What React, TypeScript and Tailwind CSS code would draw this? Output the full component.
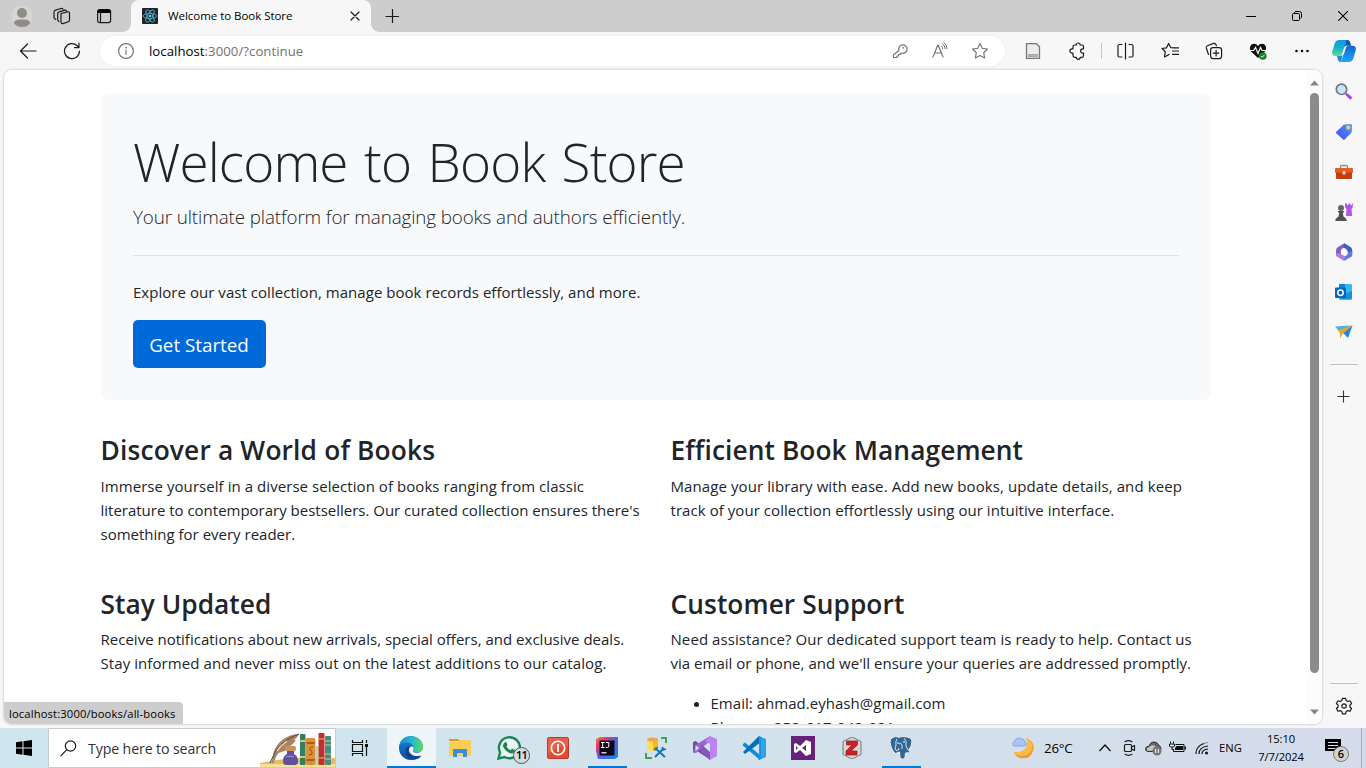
import React from "react";

type SvgProps = { w: number; h?: number; children: React.ReactNode; className?: string };

function Svg({ w, h = w, children, className = "" }: SvgProps) {
  return (
    <svg width={w} height={h} viewBox={`0 0 ${w} ${h}`} fill="none" className={`shrink-0 ${className}`}>
      {children}
    </svg>
  );
}

const line = { stroke: "#1b1b1b", strokeWidth: 1.2, strokeLinecap: "round" as const, strokeLinejoin: "round" as const };
const grey = { ...line, stroke: "#767676" };

function Cell({ className, children }: { className: string; children: React.ReactNode }) {
  return <div className={`flex shrink-0 items-center justify-center ${className}`}>{children}</div>;
}

/* ---------- Title bar ---------- */

function TitleBar() {
  return (
    <div className="flex h-8 shrink-0 bg-[#cdcdcd]">
      <Cell className="w-11">
        <Svg w={22}>
          <circle cx="11" cy="11" r="10.5" fill="#d8d6d3" />
          <circle cx="11" cy="8" r="5" fill="#8f8c88" />
          <path d="M3 18.5C3 15 6 14.500 11 14.500s8 .5 8 4C17 21 14 22 11 22s-6-1-8-3.500Z" fill="#8f8c88" />
        </Svg>
      </Cell>
      <Cell className="w-9">
        <Svg w={18}>
          <path d="M8 6.500 14.500 4.800q2-.4 2 1.400v7q0 1.200-1.200 1.500L10 16.600q-2 .4-2-1.600V8.200q0-1.300 0-1.700Z" {...line} />
          <path d="M6 14.600q-1.300-.5-1.300-2V6.700q0-1.500 1.500-1.900l5.500-1.600q1.200-.3 1.800.6" {...line} />
          <path d="M2.800 12.400Q1 12 1 10.200V5q0-1.500 1.500-1.900L8 1.500q1.200-.3 1.900.5" {...line} />
        </Svg>
      </Cell>
      <Cell className="w-12">
        <Svg w={16}>
          <rect x="1.600" y="1.600" width="13" height="13" rx="2" {...line} />
          <path d="M1.500 5V3.500q0-2 2-2h9q2 0 2 2V5Z" fill="#000" />
          <path d="M4.500 5v9" {...line} />
        </Svg>
      </Cell>
      <div className="relative ml-[3px] flex w-60 items-center rounded-t-lg bg-[#f7f7f7] pl-[11px]">
        <div className="absolute bottom-0 -left-2 h-2 w-2 bg-[radial-gradient(circle_at_0_0,#cdcdcd_7.500px,#f7f7f7_8px)]" />
        <div className="absolute -right-2 bottom-0 h-2 w-2 bg-[radial-gradient(circle_at_100%_0,#cdcdcd_7.500px,#f7f7f7_8px)]" />
        <Svg w={16}>
          <rect width="16" height="16" rx="1" fill="#20232a" />
          <g stroke="#4fa8c4" strokeWidth=".9">
            <ellipse cx="8" cy="8" rx="6.800" ry="2.600" />
            <ellipse cx="8" cy="8" rx="6.800" ry="2.600" transform="rotate(60 8 8)" />
            <ellipse cx="8" cy="8" rx="6.800" ry="2.600" transform="rotate(120 8 8)" />
          </g>
          <circle cx="8" cy="8" r="1.300" fill="#61dafb" />
        </Svg>
        <span className="ml-[10px] text-[11.500px] tracking-[-0.04px] whitespace-nowrap text-black">Welcome to Book Store</span>
        <Svg w={10} className="absolute left-[219px] top-[11px]">
          <path d="m1 1 8 8M9 1 1 9" {...line} />
        </Svg>
      </div>
      <Cell className="w-[42px]">
        <Svg w={14}>
          <path d="M7.500.5v13M1 7.500h13" {...line} />
        </Svg>
      </Cell>
      <div className="ml-auto flex">
        <Cell className="w-[46px]">
          <Svg w={10}><path d="M0 5.500h10" stroke="#000" /></Svg>
        </Cell>
        <Cell className="w-[46px]">
          <Svg w={10}>
            <rect x=".5" y="2.500" width="7" height="7" rx="1" stroke="#000" />
            <path d="M2.500 2V1.500q.3-1 1.300-1h3.700q2 0 2 2v3.700q0 1-1 1.300" stroke="#000" />
          </Svg>
        </Cell>
        <Cell className="w-[46px]">
          <Svg w={10}><path d="m0 0 10 10M10 0 0 10" stroke="#000" strokeWidth="1.100" /></Svg>
        </Cell>
      </div>
    </div>
  );
}

/* ---------- Toolbar ---------- */

function Toolbar() {
  return (
    <div className="flex h-[38px] shrink-0 bg-[#f7f7f7]">
      <Cell className="w-14">
        <Svg w={18}><path d="M17 9H1.500M8.500 2l-7 7 7 7" {...line} /></Svg>
      </Cell>
      <Cell className="w-8">
        <Svg w={18}>
          <path d="M16.500 9A7.500 7.500 0 1 1 14 3.500L16 5.500M16 1.200v4.400h-4.500" {...line} />
        </Svg>
      </Cell>
      <div className="mt-1 ml-3 flex h-[30px] w-[905px] items-center rounded-full bg-white shadow-[0_0_3px_rgba(0,0,0,0.06)]">
        <Cell className="ml-[17px] w-[18px]">
          <Svg w={18}>
            <circle cx="9" cy="9" r="7.400" {...grey} />
            <path d="M9 8v4.500" {...grey} />
            <circle cx="9" cy="5.600" r=".9" fill="#767676" />
          </Svg>
        </Cell>
        <span className="ml-[14px] pt-[2px] text-[13.200px] tracking-[0.04px] text-[#727272]">
          <span className="text-black">localhost</span>:3000/?continue
        </span>
        <div className="ml-auto mr-[5px] flex">
          <Cell className="w-10">
            <Svg w={16}>
              <path d="M7 7.500a4.200 4.200 0 1 1 2.500 2.500L8 11.500H6.500V13H5v1.500H1.500v-2.800Z" {...grey} />
              <circle cx="11.200" cy="4.800" r=".9" fill="#767676" />
            </Svg>
          </Cell>
          <Cell className="w-10">
            <Svg w={18}>
              <path d="m2 15 4.800-12h.4L12 15M3.700 11h6.600" {...grey} />
              <path d="M10.500 4q1.300 1 1.300 3M11.500 1.700q2.500 1.800 2.600 5M13 .7q3 2.300 3.200 6" {...grey} strokeWidth={1} />
            </Svg>
          </Cell>
          <Cell className="w-10">
            <Svg w={18}>
              <path d="m9 1.500 2.300 4.800 5.200.7-3.800 3.700.9 5.300L9 13.500 4.400 16l.9-5.300L1.500 7l5.200-.7Z" {...grey} />
            </Svg>
          </Cell>
        </div>
      </div>
      <div className="ml-[6px] flex">
        <Cell className="w-11">
          <Svg w={16}>
            <path d="M1.500.7h10l3 3v11.600h-13Z" fill="#ececec" stroke="#777" strokeWidth="1.300" />
            <path d="M3.500 11.500h9v2h-9Z" fill="#b5b5b5" stroke="#888" strokeWidth=".6" />
          </Svg>
        </Cell>
        <Cell className="w-11">
          <Svg w={18}>
            <path d="M5 4.500Q5 3 6.500 3h1.700a2 2 0 0 1 4 0H14q1.500 0 1.500 1.500v2.300h-.7a2 2 0 0 0 0 4.400h.7v2.600q0 1.500-1.500 1.500h-1.800a2 2 0 0 1-4 0H6.500Q5 15.300 5 13.800v-2.600h-.9a2.200 2.200 0 0 1 0-4.400H5Z" {...line} />
          </Svg>
        </Cell>
        <Cell className="w-1"><div className="h-4 w-px bg-[#c6c6c6]" /></Cell>
        <Cell className="w-11">
          <Svg w={18}>
            <path d="M6 2.500H3.500q-1.500 0-1.500 1.500v9.500Q2 15 3.500 15H6M9.500 1v16M13 2.500h2.500Q17 2.500 17 4v9.500q0 1.500-1.500 1.500H13" {...line} />
          </Svg>
        </Cell>
        <Cell className="w-[45px]">
          <Svg w={18}>
            <path d="m13.500 6-3.800-.4L7.600 1.500 5.500 5.800 1 6.500l3.300 3.200-.8 5.300 4.600-2.600M11.500 9h6M12.500 5.800h5M11.500 12.300h6" {...line} />
          </Svg>
        </Cell>
        <Cell className="w-11">
          <Svg w={18}>
            <rect x="5.600" y="5.600" width="11" height="11" rx="2.500" {...line} />
            <path d="M11.100 8.300v5.600M8.300 11.100h5.600M3.500 12.500 1.300 6Q.8 4.300 2.300 3.700L8.700 1.400q1.600-.5 2.200 1.100l.5 1.300" {...line} />
          </Svg>
        </Cell>
        <Cell className="w-11">
          <Svg w={18}>
            <path d="M9 16 2 9.500C-.5 6 1.500 1.800 5 1.800Q7.700 1.800 9 4q1.300-2.200 4-2.200c3.500 0 5.500 4.200 3 7.700Z" fill="#111" />
            <path d="M0 8.500h4.500l2-3 2.500 6 2.500-6 1.500 3h5" stroke="#f7f7f7" strokeWidth="1.200" />
            <circle cx="13.800" cy="14" r="3.800" fill="#16811d" />
            <path d="m12 14 1.300 1.300 2.300-2.600" stroke="#fff" strokeWidth=".9" />
          </Svg>
        </Cell>
        <Cell className="w-[43px]">
          <Svg w={16} h={4}>
            <circle cx="2.500" cy="2" r="1.300" fill="#111" />
            <circle cx="8" cy="2" r="1.300" fill="#111" />
            <circle cx="13.500" cy="2" r="1.300" fill="#111" />
          </Svg>
        </Cell>
        <Cell className="w-[42px]">
          <svg width="24" height="22" viewBox="0 0 24 22">
            <defs>
              <linearGradient id="cpA" x1="0" y1="0" x2="0" y2="1">
                <stop offset="0" stopColor="#1595dd" /><stop offset=".5" stopColor="#11b4c7" /><stop offset="1" stopColor="#6ddc8c" />
              </linearGradient>
              <linearGradient id="cpB" x1="0" y1="0" x2="0" y2="1">
                <stop offset="0" stopColor="#1762d4" /><stop offset="1" stopColor="#18a8f2" />
              </linearGradient>
            </defs>
            <path d="M10 0h5.500q2 0 2.500 2l1.200 3.700h-5L12 9Z" fill="#1652b5" />
            <path d="M7.500 0H13q1.700 0 1.200 2L11.300 12.500q-1 3.500-4 3.500H3.500Q-.7 16 .3 11.500L2.500 4Q3.700 0 7.500 0Z" fill="url(#cpA)" />
            <path d="M16.500 5.700h4q4.200 0 3.200 4.500L21.500 18q-1.200 4-5 4H11q-1.700 0-1.200-2l2.900-10.500q1-3.800 3.800-3.800Z" fill="url(#cpB)" />
            <path d="M5 16h3q2-.4 2.800-2.500L9.600 19q-.7 2.700 1 3H9q-2.500 0-3-2Z" fill="#1d86e5" />
            <path d="M15.500 5.800q-1.300.7-1.900 2.800l-1.400 4.600Q11.200 16 8.500 16q1.300-.7 1.900-2.800l1.400-4.600q.9-2.800 3.700-2.800Z" fill="#f3fbff" />
          </svg>
        </Cell>
      </div>
    </div>
  );
}

/* ---------- Web page ---------- */

function Section({ title, children }: { title: React.ReactNode; children: React.ReactNode }) {
  return (
    <section className="w-[570px] shrink-0">
      <h2 className="mb-[6.500px] text-[26.300px] leading-[34px] font-semibold whitespace-nowrap">{title}</h2>
      {children}
    </section>
  );
}

function BookStorePage() {
  return (
    <main className="min-w-0 flex-1 pt-6 text-[15px] leading-6 whitespace-nowrap text-[#212529]">
      <div className="ml-[97px] w-[1110px]">
        <div className="mb-[33px] h-[306px] rounded-lg bg-[#f8f9fa] px-8 pt-[34px]">
          <h1 className="mb-[7px] text-[53px] leading-[67px] font-light tracking-[-0.85px] [word-spacing:3.500px]">Welcome to Book Store</h1>
          <p className="text-[18.800px] leading-[30px] font-light tracking-[-0.1px]">Your ultimate platform for managing books and authors efficiently.</p>
          <hr className="mt-[23px] mb-6 border-0 border-t border-[#dfe0e1]" />
          <p className="mb-4 tracking-[0.04px]">Explore our vast collection, manage book records effortlessly, and more.</p>
          <button className="flex h-12 w-[133px] items-center justify-center rounded-[5px] bg-[#0069d9] pt-[2px] pr-px text-[18.800px] text-white">Get Started</button>
        </div>
        <div className="-ml-[0.500px] flex h-[154px]">
          <Section title={<span className="tracking-[0.17px]">Discover a World of Books</span>}>
            <p className="tracking-[0.06px]">Immerse yourself in a diverse selection of books ranging from classic</p>
            <p className="tracking-[-0.01px]">literature to contemporary bestsellers. Our curated collection ensures there's</p>
            <p>something for every reader.</p>
          </Section>
          <Section title={<span className="tracking-[0.09px]">Efficient Book Management</span>}>
            <p className="tracking-[0.09px]">Manage your library with ease. Add new books, update details, and keep</p>
            <p className="tracking-[0.06px]">track of your collection effortlessly using our intuitive interface.</p>
          </Section>
        </div>
        <div className="-ml-[0.500px] flex">
          <Section title={<span className="-mb-px block tracking-[0.03px]">Stay Updated</span>}>
            <p className="tracking-[0.01px]">Receive notifications about new arrivals, special offers, and exclusive deals.</p>
            <p className="tracking-[0.08px]">Stay informed and never miss out on the latest additions to our catalog.</p>
          </Section>
          <Section title={<span className="-mb-px block tracking-[0.07px]">Customer Support</span>}>
            <p className="tracking-[0.08px]">Need assistance? Our dedicated support team is ready to help. Contact us</p>
            <p className="tracking-[0.02px]">via email or phone, and we'll ensure your queries are addressed promptly.</p>
            <ul className="mt-4 list-disc pl-10">
              <li className="tracking-[0.03px]">Email: ahmad.eyhash@gmail.com</li>
              <li className="tracking-[0.25px]">Phone: +252-617-042-021</li>
            </ul>
          </Section>
        </div>
      </div>
    </main>
  );
}

function ScrollBar() {
  return (
    <div className="flex w-[15px] shrink-0 flex-col items-center bg-[#fcfcfc] pt-[10px]">
      <Svg w={9} h={6}><path d="M0 5.500 4.500.5 9 5.500Z" fill="#858585" /></Svg>
      <div className="mt-[7px] h-[580px] w-[9px] rounded-full bg-[#8b8b8b]" />
      <Svg w={9} h={6} className="mt-9"><path d="M0 .5 4.500 5.500 9 .5Z" fill="#858585" /></Svg>
    </div>
  );
}

/* ---------- Edge sidebar ---------- */

function SideBar() {
  return (
    <aside className="flex w-11 shrink-0 flex-col items-center pt-[2px]">
      <Cell className="h-10">
        <Svg w={18}>
          <path d="m10.500 10.500 1.500 1.500" stroke="#777" strokeWidth="2" />
          <path d="m12.500 12 3 2.800" stroke="#b43df0" strokeWidth="3" strokeLinecap="round" />
          <circle cx="6.500" cy="6.300" r="5.200" fill="#c5e6fb" stroke="#777" strokeWidth="1.700" />
        </Svg>
      </Cell>
      <Cell className="h-10">
        <Svg w={18}>
          <defs><linearGradient id="tag" x1="1" y1="0" x2="0" y2="1"><stop stopColor="#4b9cf5" /><stop offset="1" stopColor="#4a48f0" /></linearGradient></defs>
          <path d="M10 1.500 15.500 1q1.500 0 1.500 1.500l-.3 6q0 1-.8 1.700l-6 6q-1 1-2 0L1.500 10.500q-1-1 0-2l6.700-6.300q.7-.6 1.800-.7Z" fill="url(#tag)" />
          <circle cx="13.300" cy="4.600" r="1.700" fill="#b5d6e8" stroke="#f4cb2f" strokeWidth="1.100" />
        </Svg>
      </Cell>
      <Cell className="h-10">
        <Svg w={18}>
          <path d="M5.500 5V3.500q0-1 1-1h5q1 0 1 1V5" stroke="#8b8b8b" strokeWidth="1.300" />
          <rect y="5" width="18" height="5" rx="1" fill="#e45b23" />
          <path d="M1 9.500h16V15q0 1-1 1H2q-1 0-1-1Z" fill="#c43d10" />
          <rect x="7.500" y="8" width="3" height="3.500" rx="1" fill="#dadada" />
        </Svg>
      </Cell>
      <Cell className="h-10">
        <Svg w={18}>
          <path d="M10 .5h2V2h1.500V.5h2V2H17V.5h1L17.500 5l-1 1 .7 7H11l.5-7-1.500-1.500Z" fill="#b455f2" />
          <circle cx="6" cy="5" r="3" fill="#666" />
          <path d="M3 8h6v1.500H7.700l.8 4 3 2.500v2h-11v-2l3-2.500.8-4H3Z" fill="#505050" />
        </Svg>
      </Cell>
      <Cell className="h-10">
        <Svg w={18}>
          <path d="M9.500.3 15.500 4q1.700 1 1.700 3v4.500L12.500 9.300q0-2-1.500-3.300L7 4Q7.500 1 9.500.3Z" fill="#3f5fc4" />
          <path d="M9.500.3 3 4Q1 5.300 1 7.500V13l4.800-2V8q0-1.500 1.200-2.300L9 4.500Q8 2 9.500.3Z" fill="#7a62cb" />
          <path d="M1 10v3l7 4.200q1 .6 2 0l2.500-1.500L9.500 13 5.800 11Z" fill="#b27bdc" />
          <path d="M17.200 8v4q0 1.300-1.200 2l-6 3.300q-1 .4-2 0 2.500-1.300 2-4l2-1.300q.6-.5.6-2Z" fill="#5680da" />
          <path d="M8.500 5.700h2.300L12.700 9l-1.500 3H8.300L6 10V8Z" fill="#fff" />
        </Svg>
      </Cell>
      <Cell className="h-10">
        <Svg w={18}>
          <path d="M4 1h12q1 0 1 1v13.500q0 1-1 1H4Z" fill="#35b8f1" />
          <path d="M4 1h6v7H4Z" fill="#1283d9" />
          <path d="m7 12 10-4v7.500q0 1-1 1H5Z" fill="#1490df" />
          <rect y="4.500" width="11" height="10.500" rx="1" fill="#0068be" />
          <circle cx="5.500" cy="9.700" r="2.700" stroke="#fff" strokeWidth="1.500" />
        </Svg>
      </Cell>
      <Cell className="h-10">
        <Svg w={18}>
          <path d="M0 3.500 17.500 2.500 5 9Z" fill="#45b1ef" />
          <path d="M17.500 2.500 7 9l6 6Z" fill="#1f87e8" />
          <path d="m5 9 2 1.500L5 15Z" fill="#c97d12" />
          <path d="M17.500 2.500 2.500 7.500 5 9.500V15l2.500-4Z" fill="#eda51f" />
        </Svg>
      </Cell>
      <div className="mt-3 h-px w-7 bg-[#c2c2c2]" />
      <Svg w={14} className="mt-6"><path d="M6.500 1.500v12M.5 7.500h12" stroke="#333" strokeWidth="1.100" /></Svg>
      <div className="mt-[280px] h-px w-7 bg-[#c2c2c2]" />
      <Svg w={18} className="mt-[13px]">
        <path d="M7.400 1.300h3.200l.5 2.200 1.700 1 2.200-.7 1.600 2.700-1.700 1.600v1.900l1.700 1.500-1.600 2.800-2.200-.7-1.700 1-.5 2.200H7.400l-.5-2.200-1.700-1-2.200.7-1.600-2.800L3.100 10V8.100L1.400 6.500 3 3.800l2.200.7 1.700-1Z" {...line} />
        <circle cx="9" cy="9" r="2.200" {...line} />
      </Svg>
    </aside>
  );
}

/* ---------- Taskbar ---------- */

function AppCell({ active = false, current = false, children }: { active?: boolean; current?: boolean; children: React.ReactNode }) {
  return (
    <div className={`relative flex h-10 w-[49px] shrink-0 items-center justify-center ${current ? "bg-[#edf5f9] bg-clip-padding" : ""}`}>
      {children}
      {active && <div className={`absolute bottom-0 h-[2px] bg-[#0078d7] ${current ? "inset-x-0" : "inset-x-[5px]"}`} />}
    </div>
  );
}

function SearchArt() {
  return (
    <svg width="75" height="38" viewBox="0 0 75 38" className="ml-auto shrink-0">
      <path d="M0 34q20-4 35-5h41v9H0Z" fill="#e3bd63" />
      <path d="M0 35h76v3H0Z" fill="#f7df9c" />
      <path d="M13 27q1-9 9-16 8-6 17-6-2 4-5 6l2 .5q-4 5-8 6.500l1.500.8q-5 4-11 5.200l-2 3-3 7-2 .5Z" fill="#a88465" />
      <path d="m10 34 6-13Q25 10 39 5" stroke="#54453b" fill="none" />
      <path d="m17 22 4-5 6-5" stroke="#ead5ba" strokeWidth="1.300" fill="none" />
      <rect x="25" y="17" width="11" height="5" rx="2" fill="#c89558" />
      <path d="M27 22h7v3q4 2 4 7 0 4-3 4h-9q-3 0-3-4 0-5 4-7Z" fill="#61519c" />
      <path d="M26 28q4-2 8 0" stroke="#a79ad3" fill="none" />
      <rect x="40" y="5" width="5.500" height="31" rx="1" fill="#2f8065" />
      <path d="M40 12h5.500M40 28h5.500" stroke="#ddc36a" strokeWidth="2" />
      <rect x="45.500" y="9" width="10" height="27" rx="2" fill="#dc9037" />
      <path d="M46.500 14h8M46.500 31h8" stroke="#8e4e22" strokeWidth="1.500" />
      <path d="M53 18q-4 0-3 3 3 1 2 4l-3 1" stroke="#8e4e22" fill="none" />
      <rect x="55.500" y="17" width="3" height="19" fill="#c9cfa6" />
      <rect x="58.500" y="4" width="6" height="32" rx="1" fill="#bc3130" />
      <path d="M58.500 10h6M58.500 29h6" stroke="#f0bc70" />
      <rect x="65" y="7" width="6" height="29" rx="1" fill="#448b83" />
      <path d="M65 12h6M65 16h6M65 25h6M65 30h6" stroke="#dbca8b" />
    </svg>
  );
}

function TaskBar() {
  return (
    <div className="flex h-10 shrink-0 bg-[linear-gradient(90deg,#cfe6ee,#d3e2ec_55%,#d4dbea)]">
      <Cell className="w-12">
        <Svg w={16}>
          <path d="m0 2.300 6.500-1v6.200H0ZM7.500 1.200 16 0v7.500H7.500ZM0 8.500h6.500v6.200l-6.500-1ZM7.500 8.500H16V16l-8.500-1.200Z" fill="#000" />
        </Svg>
      </Cell>
      <div className="flex w-72 items-center border border-[#c6cbd0] bg-white pl-[11px]">
        <Svg w={17}>
          <circle cx="10.500" cy="6" r="5.200" {...line} />
          <path d="M6.800 9.700.8 15.800" {...line} />
        </Svg>
        <span className="ml-[11px] pt-[2px] text-[14.200px] tracking-[-0.13px] text-[#333]">Type here to search</span>
        <SearchArt />
      </div>
      <Cell className="w-12">
        <Svg w={18}>
          <path d="M1.500 1v2.500h10V1M1.500 17v-2.500h10V17M1.500 5.500h10v7h-10Z" stroke="#111" strokeWidth="1.200" />
          <path d="M15.500 1v3M15.500 8v9" stroke="#111" strokeWidth="1.200" />
          <path d="M14 5h3v3h-3Z" fill="#111" />
        </Svg>
      </Cell>
      <div className="ml-[2.500px] flex">
        <AppCell active current>
          <svg width="24" height="24" viewBox="0 0 24 24">
            <defs>
              <linearGradient id="edT"><stop stopColor="#168bd1" /><stop offset=".55" stopColor="#26b9cc" /><stop offset="1" stopColor="#65dc54" /></linearGradient>
              <linearGradient id="edB" x1="0" y1="0" x2="0" y2="1"><stop stopColor="#1685d9" /><stop offset="1" stopColor="#104da0" /></linearGradient>
            </defs>
            <circle cx="12" cy="12" r="12" fill="url(#edB)" />
            <path d="M.3 10C2-3 22-3 24 11c.3 5-5 6-8.500 5-2.500-1-1.500-2-1-3C15 8 11 6.500 8 6.500c-4 0-6.500 1.500-7.700 3.500Z" fill="url(#edT)" />
            <path d="M8 11c-4 7 1 12.500 7 12.500 3 0 6-1.500 7.500-4-4 2.500-12 1-13-5-.3-1.500 1-3.500 2-4-1-.2-2.500-.2-3.500.5Z" fill="#123f8b" />
            <path d="M14.500 13c-1 1.500-1 2.500.5 3.200 4 1.800 8.500-.5 9-4.200v5l-1 2c-5 2.500-12.500.5-13-4.500-.1-2.500 1.500-4 2.500-4s2.500.5 2 2.500Z" fill="#edf5f9" />
          </svg>
        </AppCell>
        <AppCell>
          <Svg w={22}>
            <path d="M0 3q0-1 1-1h8l2 2h-11Z" fill="#dc9a1b" />
            <path d="M0 5h9l2-2h10q1 0 1 1v14q0 1-1 1H1q-1 0-1-1Z" fill="#fdce55" />
            <path d="M4 20v-7q0-1 1-1h12q1 0 1 1v7h-4v-4H8v4Z" fill="#398cd8" />
          </Svg>
        </AppCell>
        <AppCell>
          <div className="relative">
            <Svg w={24}>
              <path d="m1.500 22.500 1.600-6A10.500 10.500 0 1 1 7.500 21Z" fill="#edf4f4" stroke="#198754" strokeWidth="2.400" />
              <path d="M7.500 6.500q1-1 2 0l1 2.500-1 1.500q1.300 2.500 4 3.700l1.500-1.500 2.800 1.300q.3 3-3 3.500-3 0-6.500-3.500T6.500 8.500q0-1 1-2Z" fill="#198754" />
            </Svg>
            <span className="absolute top-[11px] left-4 flex h-[17px] w-[17px] items-center justify-center rounded-full border border-[#555] bg-[#d5dce0] text-[11px] font-semibold tracking-[-0.8px] text-black">11</span>
          </div>
        </AppCell>
        <AppCell>
          <Svg w={22}>
            <rect x=".5" y=".5" width="21" height="21" rx="1.500" fill="#e04c34" stroke="#b93b29" />
            <path d="M1 1h20v8Q9 9 1 18Z" fill="#eb705b" opacity=".6" />
            <circle cx="11" cy="11" r="6.700" stroke="#fff" strokeWidth="1.600" />
            <path d="M11 7v8" stroke="#fff" strokeWidth="1.800" />
          </Svg>
        </AppCell>
        <AppCell active>
          <Svg w={22}>
            <defs><linearGradient id="ij" x1="0" y1="0" x2="1" y2="1"><stop stopColor="#f6851f" /><stop offset=".25" stopColor="#e9357a" /><stop offset=".5" stopColor="#5960df" /><stop offset="1" stopColor="#168bee" /></linearGradient></defs>
            <path d="M0 2 4 0h18v20l-3 2H2L0 14Z" fill="url(#ij)" />
            <rect x="3.500" y="3.500" width="15" height="15" fill="#100816" />
            <path d="M5 5.500h3.500M5 10.500h3.500M6.700 5.500v5M9.800 5.500h3v3.500q0 1.500-1.300 1.500h-1.700" stroke="#fff" strokeWidth="1" />
            <path d="M5.500 15.800h5" stroke="#fff" strokeWidth="1.200" />
          </Svg>
        </AppCell>
        <AppCell>
          <Svg w={22}>
            <path d="M2 2.500v10q5 3 11 0v-10Z" fill="#ffdc52" />
            <path d="M8 3h5v9.500q-2 1.500-5 1.500Z" fill="#f5bb18" />
            <ellipse cx="7.500" cy="2.500" rx="5.500" ry="2" fill="#efa64b" />
            <path d="M16 1h5v5M1 16v5h6" stroke="#47a255" strokeWidth="2" />
            <path d="m10 11 10 9M19 11l-9 9" stroke="#1874bd" strokeWidth="2" />
            <path d="m9 13 4-3M17 10l1 3 3-1" stroke="#1874bd" strokeWidth="1.500" />
          </Svg>
        </AppCell>
        <AppCell>
          <Svg w={24}>
            <path d="m0 6 3-1 14 14-1 4L4 15l-3 2-1-1Z" fill="#744ba8" />
            <path d="m0 16 3 1L17 5V0L4 8Z" fill="#9b66cf" />
            <path d="m17 0 7 3v17l-7 4-5-5 5-3V8l-5-3Z" fill="#bd83f0" />
            <path d="m8 8 9 8v8l-9-8Z" fill="#8656b8" />
            <path d="M2.500 9v6L6 12Z" fill="#d4e2ed" />
          </Svg>
        </AppCell>
        <AppCell>
          <Svg w={24}>
            <path d="m1 8 2-1.500 15 12.500v5L.8 9.500Z" fill="#168bd2" />
            <path d="M1 16 17 0l2 6L3 18Z" fill="#0072ba" />
            <path d="m17 0 7 3v18l-7 3Z" fill="#29a4ef" />
            <path d="m17 0 2 1v22l-2 1-1-1 1.500-4V6Z" fill="#1f91dc" />
          </Svg>
        </AppCell>
        <AppCell>
          <Svg w={24}>
            <path d="M0 0h24v24H0Z" fill="#68217a" />
            <path d="m3 8 2-1 4 3 6-6 5 2v12l-5 2-6-6-4 3-2-1Zm2 2v4l2-2Zm10-1-4 3 4 3Z" fill="#fff" fillRule="evenodd" />
          </Svg>
        </AppCell>
        <AppCell>
          <Svg w={22}>
            <path d="m11 0 9 4.500v13L11 22l-9-4.500v-13Z" fill="#d9d6d5" stroke="#777" />
            <path d="M5.500 4h11v4L10 14h6v4H5v-4l6-6H5.500Z" fill="#cf202b" stroke="#861721" strokeWidth=".7" />
          </Svg>
        </AppCell>
        <AppCell active>
          <Svg w={24}>
            <path d="M3 2q3-2.500 7-.7Q14-.5 18 1q4.500 0 5 4 0 5-3.500 9.500l2 1q-2 2-5 1.500L16 22q-2 2.500-5 0l-.5-6-4 1.500Q2 14 1 6q0-3 2-4Z" fill="#336791" stroke="#edf1f4" />
            <path d="M8 3q-2 3-1 6l-1 4 2 2M15 2q3 3 2 8l2 4M10 8q2-2 3 1v4M8 14q2 1 2-2" stroke="#e3edf3" strokeWidth=".9" />
            <path d="M8 7h2M14 6h2" stroke="#fff" />
          </Svg>
        </AppCell>
      </div>
      <div className="ml-auto flex items-center text-[11.200px] text-black">
        <Svg w={24} className="mr-[9px]">
          <path d="M15 2q10 4 7 13T9 22q-5-2-6-6 9 1 12-4 2-5 0-10Z" fill="#f29a24" />
          <path d="M15 2q8 4 6 11T10 20q-5-1-7-4 9 1 12-4 2-5 0-10Z" fill="#fdb94a" />
          <path d="M3 10q-3-3 1-5 2-5 6-2 3-1 4 3 3 2 0 4Z" fill="#a7c6f5" stroke="#80a6e4" />
        </Svg>
        <span className="w-[49px] pt-px text-[13.300px] tracking-[-0.2px]">26°C</span>
        <Cell className="w-6"><Svg w={12} h={8}><path d="m.5 7 5.500-6 5.500 6" stroke="#111" strokeWidth="1.300" /></Svg></Cell>
        <Cell className="w-6">
          <Svg w={14} h={16}>
            <rect x="2.500" y="4.500" width="7" height="7" rx="1" {...line} />
            <path d="m9.500 7 3-1.500v5l-3-1.500M3 1.700q3.500-2 7 0M3 14.300q3.500 2 7 0" {...line} />
          </Svg>
        </Cell>
        <Cell className="w-6">
          <Svg w={17} h={16}>
            <path d="M3 11.500q-3-.5-2.500-3T4 6.500q1-4.500 5-4.500 3.500 0 4.500 3Q16 6 16 9q0 2.500-3 2.500Z" fill="#666" stroke="#333" />
            <path d="M4 7q2-2.500 5.500-1.500 2 1.500 2.500 5l-9 .5Q0 9 4 7Z" fill="#c2c4c8" />
            <circle cx="12" cy="11" r="4.500" fill="#767676" />
            <path d="M10.700 9v4M13.300 9v4" stroke="#fff" />
          </Svg>
        </Cell>
        <Cell className="w-6">
          <Svg w={17} h={14}>
            <path d="M6.500 3.500H15v7H4.500V8.500" stroke="#111" />
            <path d="M7.500 5H14v4H6V7Z" fill="#111" /><path d="M15.500 5.500H17v3h-1.500Z" fill="#111" />
            <path d="M1.500.5v2M4.500.5v2M.5 3h5v2l-1 1h-3l-1-1ZM3 6v2.500h2" stroke="#111" />
          </Svg>
        </Cell>
        <Cell className="w-[26px]">
          <Svg w={14}>
            <path d="M1 13Q1 3 13 1.500" stroke="#999" strokeWidth="1.200" />
            <path d="M4 13q0-7 9-8M7 13q0-4.500 6-5" stroke="#111" strokeWidth="1.200" />
            <circle cx="11.500" cy="12" r="1.500" fill="#111" />
            <path d="M1 13Q1 5 9 2.500" stroke="#222" strokeWidth="1.100" />
          </Svg>
        </Cell>
        <span className="ml-1 w-[35px]">ENG</span>
        <div className="-mt-px w-[54px] text-center leading-[18px] tracking-[-0.15px] whitespace-nowrap">
          <div>15:10</div>
          <div>7/7/2024</div>
        </div>
        <div className="relative ml-[17px] h-6 w-9">
          <Svg w={16} className="mt-[3px]">
            <path d="M0 0h16v12h-3v3l-3-3H0Z" fill="#000" />
            <path d="M3 3.500h10M3 6.500h10M3 9.500h7" stroke="#d4dbea" />
          </Svg>
          <span className="absolute top-[10px] left-[8px] flex h-4 w-4 items-center justify-center rounded-full border border-[#777] bg-[#d2d2d2] text-[11px] font-semibold">6</span>
        </div>
        <div className="h-10 w-[5px] border-l border-[#a7abb5]" />
      </div>
    </div>
  );
}

export default function App() {
  return (
    <div className="flex h-[768px] w-[1366px] flex-col overflow-hidden bg-[#f7f7f7] font-['Open_Sans','Noto_Sans',sans-serif]">
      <TitleBar />
      <Toolbar />
      <div className="flex h-[658px] shrink-0">
        <div className="relative ml-1 flex h-[654px] w-[1318px] shrink-0 overflow-hidden rounded-lg bg-white shadow-[0_0_2px_1px_rgba(0,0,0,0.13)]">
          <BookStorePage />
          <ScrollBar />
          <div className="absolute bottom-0 left-0 flex h-[22px] w-[179px] items-center rounded-tr bg-[#cdcdcd] pt-[2px] pl-[5px] text-[11.200px] tracking-[0.15px] whitespace-nowrap text-black">
            localhost:3000/books/all-books
          </div>
        </div>
        <SideBar />
      </div>
      <TaskBar />
    </div>
  );
}
